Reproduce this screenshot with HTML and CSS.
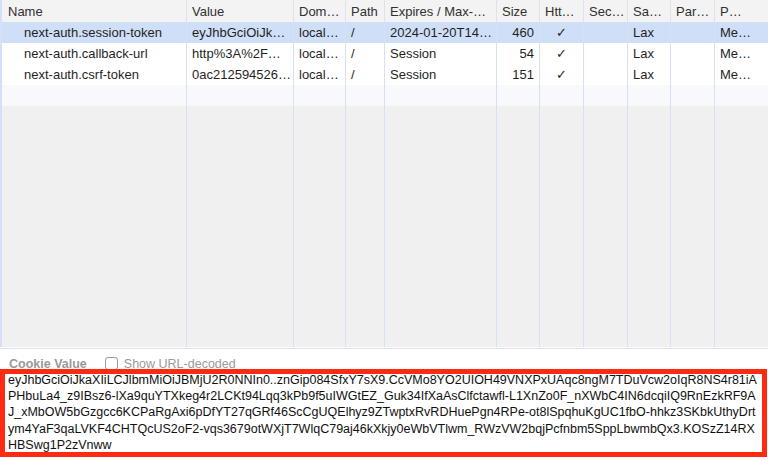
FILE: index.html
```html
<!DOCTYPE html>
<html lang="en">
  <head>
    <meta charset="UTF-8" />
    <meta name="viewport" content="width=device-width, initial-scale=1.0" />
    <title>Cookies</title>
    <link rel="stylesheet" href="styles.css">
  </head>
  <body>
    <div class="grid">
      <table class="cookies">
        <colgroup>
          <col style="width: 186px" />
          <col style="width: 107px" />
          <col style="width: 52px" />
          <col style="width: 39px" />
          <col style="width: 112px" />
          <col style="width: 43px" />
          <col style="width: 44px" />
          <col style="width: 44px" />
          <col style="width: 43px" />
          <col style="width: 44px" />
          <col style="width: 54px" />
        </colgroup>
        <thead>
          <tr>
            <th>Name</th>
            <th>Value</th>
            <th>Dom…</th>
            <th>Path</th>
            <th>Expires / Max-…</th>
            <th>Size</th>
            <th>Htt…</th>
            <th>Sec…</th>
            <th>Sa…</th>
            <th>Par…</th>
            <th>P…</th>
          </tr>
        </thead>
        <tbody>
          <tr class="selected">
            <td class="name">next-auth.session-token</td>
            <td>eyJhbGciOiJk…</td>
            <td>local…</td>
            <td>/</td>
            <td>2024-01-20T14…</td>
            <td class="num">460</td>
            <td class="check">✓</td>
            <td></td>
            <td>Lax</td>
            <td></td>
            <td>Me…</td>
          </tr>
          <tr>
            <td class="name">next-auth.callback-url</td>
            <td>http%3A%2F…</td>
            <td>local…</td>
            <td>/</td>
            <td>Session</td>
            <td class="num">54</td>
            <td class="check">✓</td>
            <td></td>
            <td>Lax</td>
            <td></td>
            <td>Me…</td>
          </tr>
          <tr>
            <td class="name">next-auth.csrf-token</td>
            <td>0ac212594526…</td>
            <td>local…</td>
            <td>/</td>
            <td>Session</td>
            <td class="num">151</td>
            <td class="check">✓</td>
            <td></td>
            <td>Lax</td>
            <td></td>
            <td>Me…</td>
          </tr>
          <tr class="empty">
            <td></td><td></td><td></td><td></td><td></td><td></td>
            <td></td><td></td><td></td><td></td><td></td>
          </tr>
          <tr class="filler">
            <td></td><td></td><td></td><td></td><td></td><td></td>
            <td></td><td></td><td></td><td></td><td></td>
          </tr>
        </tbody>
      </table>
    </div>

    <div class="value-bar">
      <span class="value-title">Cookie Value</span>
      <label class="decode">
        <span class="checkbox"></span>
        Show URL-decoded
      </label>
    </div>

    <div class="value-pane">
      <div class="value-line">eyJhbGciOiJkaXIiLCJlbmMiOiJBMjU2R0NNIn0..znGip084SfxY7sX9.CcVMo8YO2UIOH49VNXPxUAqc8ngM7TDuVcw2oIqR8NS4r81iA</div>
      <div class="value-line">PHbuLa4_z9IBsz6-lXa9quYTXkeg4r2LCKt94Lqq3kPb9f5uIWGtEZ_Guk34IfXaAsClfctawfl-L1XnZo0F_nXWbC4IN6dcqiIQ9RnEzkRF9A</div>
      <div class="value-line">J_xMbOW5bGzgcc6KCPaRgAxi6pDfYT27qGRf46ScCgUQElhyz9ZTwptxRvRDHuePgn4RPe-ot8lSpqhuKgUC1fbO-hhkz3SKbkUthyDrt</div>
      <div class="value-line">ym4YaF3qaLVKF4CHTQcUS2oF2-vqs3679otWXjT7WlqC79aj46kXkjy0eWbVTlwm_RWzVW2bqjPcfnbm5SppLbwmbQx3.KOSzZ14RX</div>
      <div class="value-line">HBSwg1P2zVnww</div>
      <div class="highlight"></div>
    </div>
  </body>
</html>
```

FILE: styles.css
```css
body {
  margin: 0;
  font-family: "Liberation Sans", Arial, sans-serif;
  font-size: 13px;
  color: #1f1f1f;
  background-color: white;
  width: 768px;
  height: 461px;
  overflow: hidden;
}

.grid {
  height: 348px;
  border-bottom: 1px solid #d6e1f3;
  overflow: hidden;
}

.cookies {
  width: 768px;
  table-layout: fixed;
  border-collapse: separate;
  border-spacing: 0;
}

.cookies th,
.cookies td {
  padding: 0 4px 0 5px;
  white-space: nowrap;
  overflow: hidden;
  text-align: left;
  font-weight: normal;
  border-left: 1px solid #d6e1f3;
}

.cookies th:first-child,
.cookies td:first-child {
  border-left: 2px solid #d3e0f7;
  padding-left: 6px;
}

.cookies th {
  height: 22px;
  background-color: #f3f3f3;
  color: #303030;
  border-left-color: #dde3ec;
}

.cookies td {
  height: 21px;
  background-color: white;
}

.cookies td.name {
  padding-left: 22px;
}

.cookies td.num {
  text-align: right;
  padding-right: 5px;
}

.cookies td.check {
  text-align: center;
  padding-left: 3px;
}

.selected td {
  background-color: #cfdff8;
}

.empty td {
  background-color: #f7f9fd;
}

.filler td {
  height: 241px;
  background-color: #f0f0f0;
}

.value-bar {
  display: flex;
  align-items: center;
  height: 20px;
  padding: 9px 0 0 9px;
  box-sizing: border-box;
  font-size: 12.5px;
  color: #999999;
}

.value-title {
  font-weight: bold;
  margin-right: 18px;
}

.decode {
  display: flex;
  align-items: center;
}

.checkbox {
  display: inline-block;
  width: 11px;
  height: 11px;
  border: 1px solid #9a9a9a;
  border-radius: 3px;
  margin-right: 6px;
  background: white;
}

.value-pane {
  position: relative;
  height: 92px;
  padding: 3px 0 0 8px;
  box-sizing: border-box;
  font-size: 12.5px;
  color: #111;
}

.value-line {
  white-space: nowrap;
  overflow: hidden;
  line-height: 16.2px;
  width: 760px;
}

.highlight {
  position: absolute;
  top: 0;
  left: 0;
  width: 767px;
  height: 88px;
  box-sizing: border-box;
  border: 5px solid #ff2a12;
  pointer-events: none;
}
```
